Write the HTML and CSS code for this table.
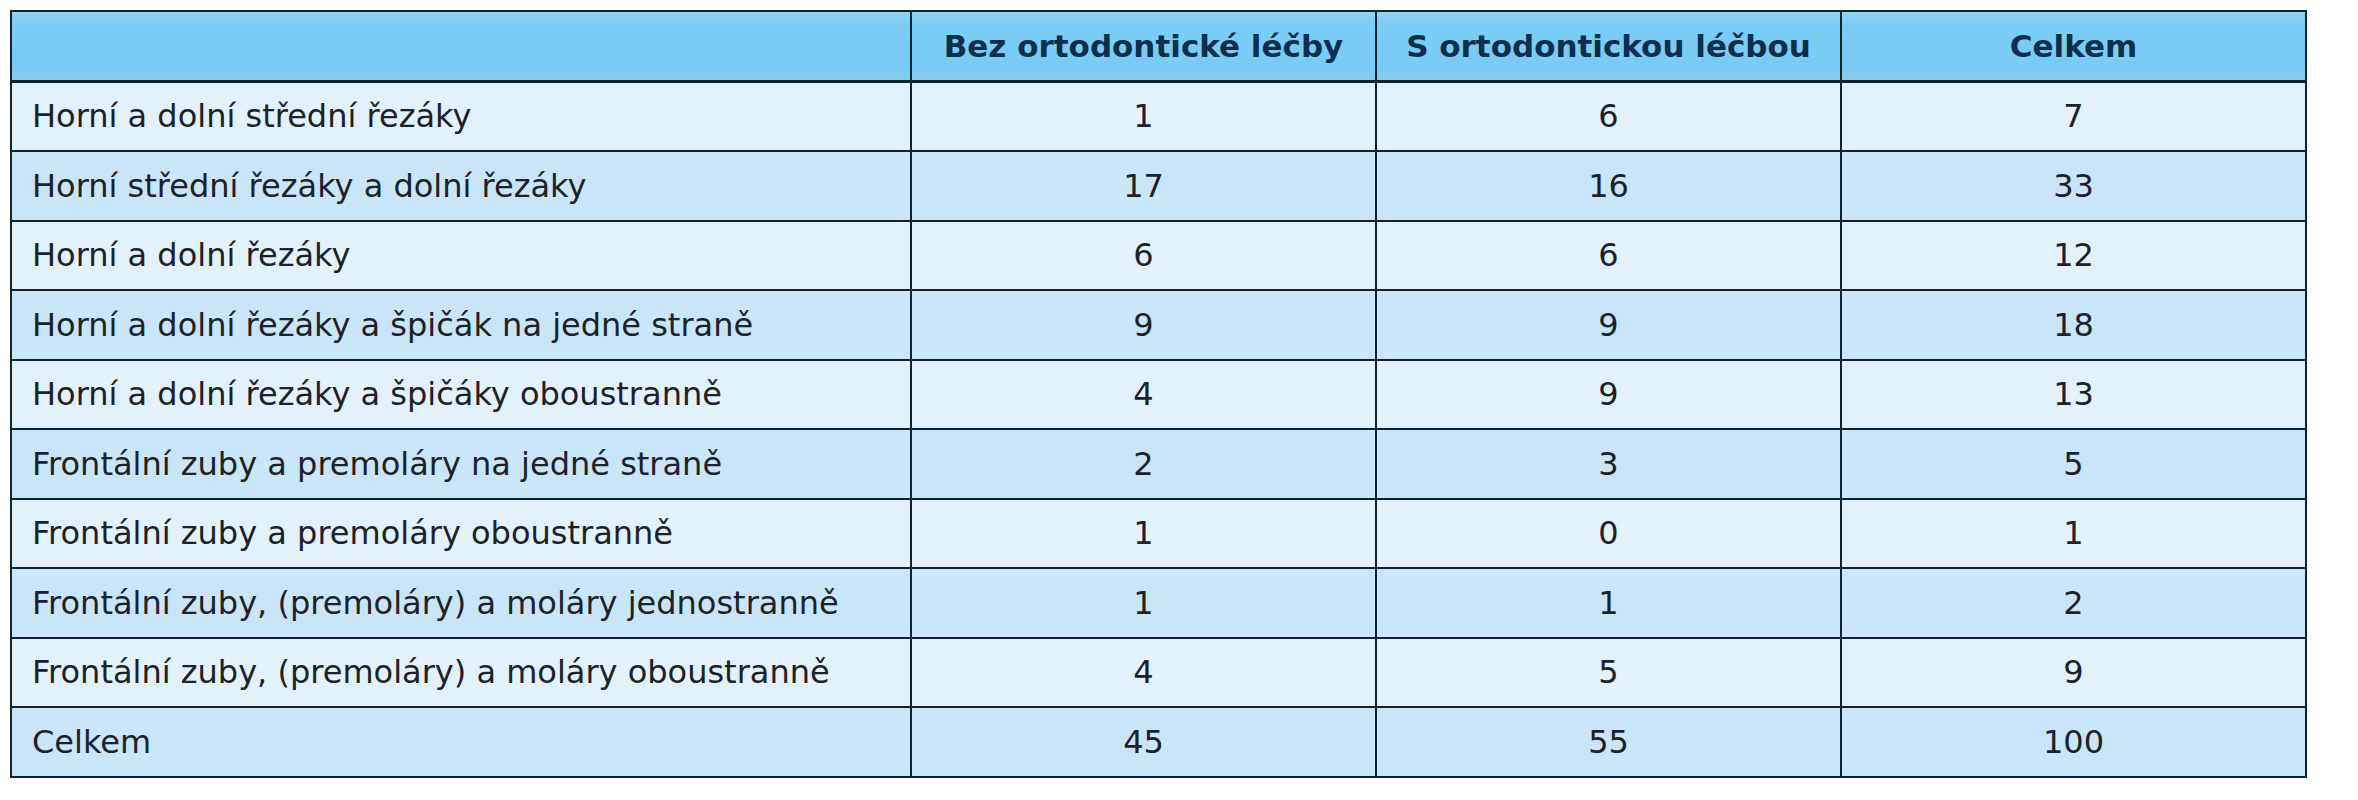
FILE: index.html
```html
<!DOCTYPE html>
<html lang="cs">
<head>
<meta charset="utf-8">
<title>Tabulka</title>
<link rel="stylesheet" href="styles.css">
</head>
<body>
<table class="data">
  <colgroup>
    <col class="c-label">
    <col class="c-num">
    <col class="c-num">
    <col class="c-num">
  </colgroup>
  <thead>
    <tr>
      <th></th>
      <th>Bez ortodontické léčby</th>
      <th>S ortodontickou léčbou</th>
      <th>Celkem</th>
    </tr>
  </thead>
  <tbody>
    <tr class="light"><td>Horní a dolní střední řezáky</td><td>1</td><td>6</td><td>7</td></tr>
    <tr class="dark"><td>Horní střední řezáky a dolní řezáky</td><td>17</td><td>16</td><td>33</td></tr>
    <tr class="light"><td>Horní a dolní řezáky</td><td>6</td><td>6</td><td>12</td></tr>
    <tr class="dark"><td>Horní a dolní řezáky a špičák na jedné straně</td><td>9</td><td>9</td><td>18</td></tr>
    <tr class="light"><td>Horní a dolní řezáky a špičáky oboustranně</td><td>4</td><td>9</td><td>13</td></tr>
    <tr class="dark"><td>Frontální zuby a premoláry na jedné straně</td><td>2</td><td>3</td><td>5</td></tr>
    <tr class="light"><td>Frontální zuby a premoláry oboustranně</td><td>1</td><td>0</td><td>1</td></tr>
    <tr class="dark"><td>Frontální zuby, (premoláry) a moláry jednostranně</td><td>1</td><td>1</td><td>2</td></tr>
    <tr class="light"><td>Frontální zuby, (premoláry) a moláry oboustranně</td><td>4</td><td>5</td><td>9</td></tr>
    <tr class="dark"><td>Celkem</td><td>45</td><td>55</td><td>100</td></tr>
  </tbody>
</table>
</body>
</html>
```
FILE: styles.css
```css
html, body {
  margin: 0;
  padding: 0;
  background: #ffffff;
}

body {
  padding: 10px 0 0 10px;
}

.data {
  border-collapse: collapse;
  width: 2296px;
  table-layout: fixed;
  font-family: "DejaVu Sans", Verdana, sans-serif;
  color: #1b2228;
}

.c-label { width: 900px; }
.c-num { width: 465px; }

.data th,
.data td {
  border: 2px solid #0f2230;
  height: 67.5px;
  padding: 0;
  vertical-align: middle;
}

.data thead th {
  height: 67.5px;
  background: linear-gradient(to bottom, #8fd4f4 0%, #7ccdf4 20%, #7acbf3 80%, #86cdee 100%);
  font-weight: bold;
  font-size: 31px;
  color: #0b2f4c;
  text-align: center;
  border-bottom-width: 3px;
}

.data td {
  font-size: 32px;
  text-align: center;
}

.data td:first-child {
  text-align: left;
  padding-left: 20px;
}

.data tr.light td {
  background: #e3f1fb;
}

.data tr.dark td {
  background: #c9e6f9;
}
```
